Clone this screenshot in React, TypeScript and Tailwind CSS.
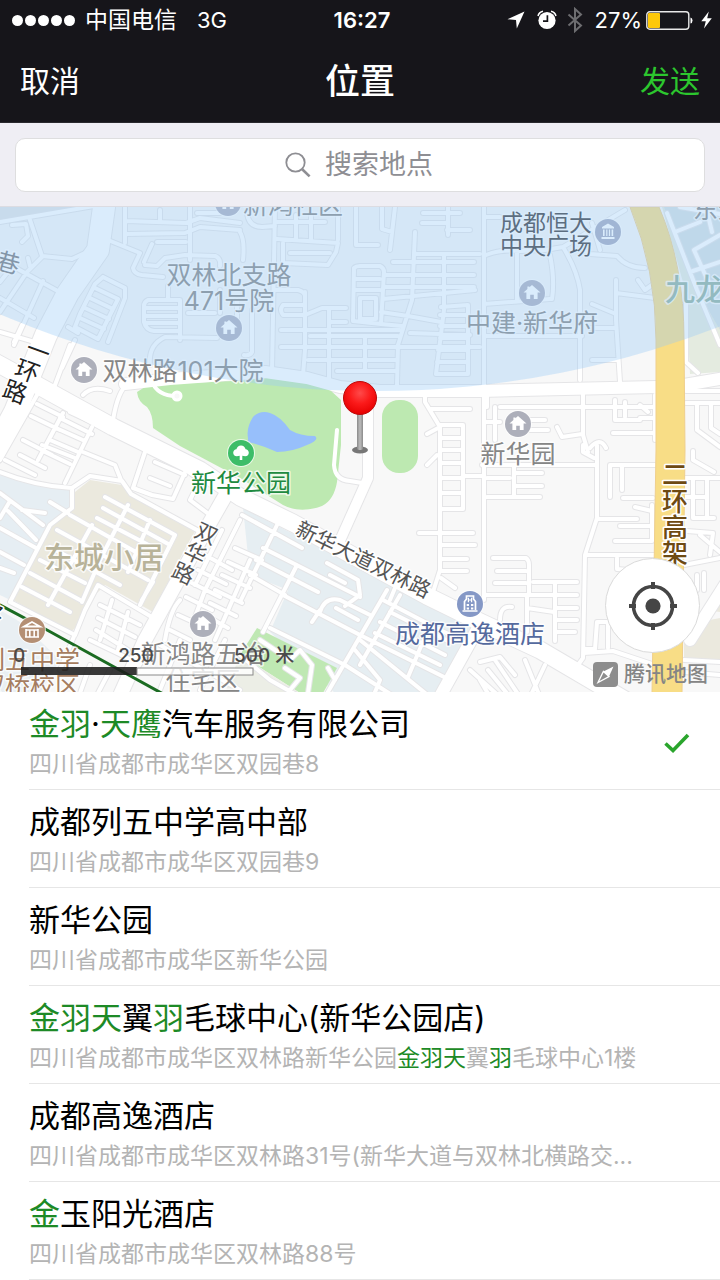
import { useState, type ReactNode } from "react";

type Part = { t: string; hit?: boolean };
type Place = { id: string; name: Part[]; address: Part[] };

const places: Place[] = [
  {
    id: "p1",
    name: [{ t: "金羽", hit: true }, { t: "·" }, { t: "天鹰", hit: true }, { t: "汽车服务有限公司" }],
    address: [{ t: "四川省成都市成华区双园巷8" }],
  },
  { id: "p2", name: [{ t: "成都列五中学高中部" }], address: [{ t: "四川省成都市成华区双园巷9" }] },
  { id: "p3", name: [{ t: "新华公园" }], address: [{ t: "四川省成都市成华区新华公园" }] },
  {
    id: "p4",
    name: [{ t: "金羽天", hit: true }, { t: "翼" }, { t: "羽", hit: true }, { t: "毛球中心(新华公园店)" }],
    address: [
      { t: "四川省成都市成华区双林路新华公园" },
      { t: "金羽天", hit: true },
      { t: "翼" },
      { t: "羽", hit: true },
      { t: "毛球中心1楼" },
    ],
  },
  {
    id: "p5",
    name: [{ t: "成都高逸酒店" }],
    address: [{ t: "四川省成都市成华区双林路31号(新华大道与双林北横路交..." }],
  },
  {
    id: "p6",
    name: [{ t: "金", hit: true }, { t: "玉阳光酒店" }],
    address: [{ t: "四川省成都市成华区双林路88号" }],
  },
];

const lanes = [
  // north-west blocks
  "M0 222L100 205M30 220L42 256L72 259L85 253M42 257L27 272L0 312M14 267L65 295M43 281L14 345M0 298L34 318M12 225L26 224L28 236L22 242M28 258L30 266M0 282L8 272",
  "M108 240L140 253L133 268Q134 274 142 275L163 277M125 207V243M126 234L185 233L200 227L240 230M190 207V260M126 221L186 223L200 218L240 223M157 242H186M145 265L157 266L165 258L185 255L215 256Q221 258 220 266M144 262L152 244M197 213H220M160 210V222",
  "M103 277L125 288L125 298L108 342M103 277L95 284L80 314M95 288L118 299M90 298L113 309M85 308L109 319M80 318L104 329M75 327L98 339M118 299L98 339M80 314L75 327M68 327L78 333",
  "M180 340V300H148Q144 302 144 306V322Q146 330 154 331H180M146 308H178M146 316H178M146 323H178M168 286V300M150 365Q148 345 165 337L217 338M188 313H215M220 290V313",
  // north-central blocks
  "M275 207L272 372M247 212Q248 227 262 227L275 226M275 222L325 222M296 215V240M311 215V240M277 239L338 243L336 252L328 265L283 263V243M290 253H330M338 207V240M240 232Q245 240 243 260",
  "M356 207V245H378M382 207V229L392 232M395 207L390 250M423 213H460M422 223H447M448 207V235M447 230H470",
  "M415 232L412 300L398 345L397 385M393 262H474M415 254H480M444 255V310L436 374H468V305L441 307M384 275H474M384 287H474M383 299L475 290M440 315H467M440 326H467M440 338H467M438 350H467M437 362H467",
  "M354 268Q356 266 360 266H380Q384 268 384 272L381 324L353 321ZM356 279H380M356 290H380M360 298H376V319H360ZM381 312L408 316L441 322M381 324L402 326M410 333L470 335",
  "M281 330H400M310 336H398M281 347H480M308 360H396M337 371H396M365 336V370M329 308V380M305 292V350L303 375M276 290H298Q305 292 305 296V305L283 305Q279 310 283 315H305L322 308H346M330 322H346",
  "M237 300V335M252 310V352Q250 356 244 355",
  // north-east blocks
  "M484 207V386M486 217H500M486 255Q500 249 520 251L545 250M517 253V300M484 304L550 299M550 255Q555 280 552 299M563 247Q577 270 580 290V380M545 250L563 247L625 210M484 336H582M583 250L590 254L617 256Q627 268 645 268M592 223L600 250M616 280V320L620 382M616 293L655 298M592 304L616 314M590 328H616M592 360H617M638 280L645 290L652 285",
  "M667 213L697 290L720 345M686 293V362L698 373M675 232L700 222M720 235L694 250L712 290M680 207L720 214M706 207L712 232M690 272L720 262",
  "M487 393V407M500 407H655M495 407V440M583 392V435L588 452M615 400V420H640M625 402V417M640 405L648 412M557 427L562 437L582 434M613 433H654M484 422H500M530 420H545M530 430H548M590 448Q600 436 606 448M655 395V440M655 418H640",
  "M686 391H720M686 403H720M697 403V430L720 447M711 403V428L720 434",
  "M484 390V600M425 393V402L440 427V570L433 592M430 409H470M440 425H463V509H441M427 434L440 427M441 438H463M441 450H463M441 463H463M441 478H463M441 493H463M427 465L437 455M463 476H484M419 533H473M441 545H475M442 559H467M442 571H467M441 578L455 588",
  "M482 465H597M514 465V497M487 478H510M514 473H542M514 486H542M487 497H540M597 445V518L585 555L583 658L573 672M583 445V452L594 458M598 519H637M585 555H655M615 541H652V505M620 526H652M610 465V497M610 465H655M622 465V490M623 498H653M635 507L652 511",
  "M493 558H526Q529 560 529 565V595M497 571H526M495 583H526M486 595H577M533 582H577M555 582V641M527 595V632M527 608L554 612M557 608H577M557 620H577M557 632H575M500 620Q500 605 512 607M597 622L595 649H584M608 622V648M597 622H608M584 653L613 651L655 665M617 558V569L652 572",
  "M693 451V460L714 472M684 478H720M693 478V518H714M707 478V518M685 497H707M687 531L713 533L710 555M684 565L720 558M700 535L720 552M697 575V590M704 573V590M684 660L720 662M684 672L720 675",
  // park surroundings
  "M337 430L334 465Q335 480 350 481L362 483M152 382Q158 396 176 396M128 384Q118 390 113 420M128 384L200 379M70 345L55 385M83 395Q92 385 110 391M75 340L62 368M0 332L45 345M22 325L14 342",
  // west blocks
  "M37 395L0 460M37 404L63 417M31 416L60 430M23 440L52 455M20 455L45 468M63 413L38 460M60 418L92 434M56 428L85 441M50 440L78 452M45 452L70 464M92 427L65 483M70 412L113 432L150 450M5 460L35 475M42 445L75 458",
  "M0 472Q35 486 72 488V508L50 525L10 602M72 488L90 476L122 481L131 494L197 530M83 452L115 465L121 480M145 452L133 488L152 495L173 499L186 470M155 462L185 475M150 478L170 486M186 470L200 480L190 500L210 515",
  "M0 493L43 525M8 511L36 540M0 528L36 548M0 552L24 565M0 568L14 573M50 502L68 513M10 501L0 518M22 510L45 513",
  "M105 497L175 535M103 508L170 545M97 518L158 550M70 515L150 560M57 530L148 580M50 547L120 585M40 560L85 583M30 573L80 600M22 587L70 612M128 505L100 560L82 602M150 520L128 572M175 535L140 605M92 525L48 605M153 582L142 600M10 602L75 635L85 610L98 585L150 616",
  "M112 600L100 640M100 605L140 625M98 618L135 637M96 630L128 650M128 612L118 650M90 640L140 664M75 634L60 670",
  // south blocks west of the avenue
  "M240 520L205 590L192 625M222 530L195 585M205 555L232 570M198 570L226 584M192 583L220 597M186 597L212 610M180 600Q170 610 165 640M178 615L200 625M170 630L190 640M235 548L262 560M228 562L256 575M222 575L250 588M215 590L242 603M210 603L236 616M205 615L228 628M250 560L215 640M160 645L240 690M180 640L160 690M225 640L200 690M90 665L80 693M110 670L98 693",
  "M277 525L240 602M242 515L302 548M263 548L360 597M256 560L318 592M250 575L285 595M297 565L263 632M283 595L360 635L450 680M270 628L345 665L395 697M327 563L358 580L360 595L345 606M320 612Q325 596 340 600L370 615M336 608L358 620M320 610L312 622M387 590L325 697M400 595L360 665M355 650L380 680L373 697M383 600L440 630L455 637M390 612L450 642M380 622L445 655M375 633L440 665M430 625L408 677M360 640L430 697M330 575L345 583M395 588L390 600",
  "M260 640L290 660L300 650L312 665L308 693M285 668L300 678L290 690M240 655L270 680L300 697M328 668L335 680",
  "M480 662L500 657L515 675M488 670L510 697M495 660L520 697M470 670L500 697M525 660L540 697M480 680L490 697M545 665L530 697",
];

const streets = [
  { w: 10, d: "M368 390V478L338 545" },
  { w: 12, d: "M125 384L170 379L265 372L307 378L340 387L380 391L480 391L657 387M684 385L725 378" },
  { w: 14, d: "M232 484L200 540L145 640L118 700" },
  { w: 12, d: "M478 628L438 700M725 585L690 640" },
  { w: 22, d: "M105 200L98 250L68 293L46 335L15 412L-8 455" },
  { w: 17, d: "M-5 362L37 385L113 427L200 470L240 497L293 523L427 596L480 622L540 650L625 700" },
];

const laneD = lanes.join("");

function Poi({ x, y, fill, children }: { x: number; y: number; fill: string; children: ReactNode }) {
  return (
    <g transform={`translate(${x} ${y})`}>
      <circle r="14" fill="#ffffff" opacity="0.7" />
      <circle r="13" fill={fill} />
      {children}
    </g>
  );
}

const House = () => (
  <path d="M0 -8L8.5 -0.5H5.6V6H1.8V1.8H-1.8V6H-5.6V-0.5H-8.5L-4.6 -4V-6.6H-2.6V-5.7Z" fill="#fff" />
);

function MapDrawing() {
  return (
    <svg
      className="absolute inset-0 h-full w-full"
      viewBox="0 207 720 485"
      preserveAspectRatio="xMidYMid slice"
      role="img"
      aria-label="地图"
      fontFamily='Inter, "Noto Sans CJK SC", sans-serif'
    >
      <defs>
        <radialGradient id="pinHead" cx="0.5" cy="0.35" r="0.65">
          <stop offset="0" stopColor="#ff4a4a" />
          <stop offset="0.5" stopColor="#fb1a1a" />
          <stop offset="1" stopColor="#e60000" />
        </radialGradient>
        <linearGradient id="pinStem" x1="0" x2="1" y1="0" y2="0">
          <stop offset="0" stopColor="#8b8b8b" />
          <stop offset="0.5" stopColor="#bdbdbd" />
          <stop offset="1" stopColor="#8b8b8b" />
        </linearGradient>
      </defs>
      <rect x="0" y="207" width="720" height="486" fill="#f8f8f8" />

      <path d="M0 475L70 489V508L50 525L10 600L0 595Z" fill="#e6eef3" />
      <path d="M75 492L90 480L122 485L131 496L197 528L187 545L153 612L105 585L90 600L80 625L70 632L13 600L50 526L72 510Z" fill="#ebe9de" />
      <path d="M243 508L480 630L442 693H335L270 632L288 590L250 575Z" fill="#e6eef2" />
      <path d="M0 610L20 622L60 660L40 693H0Z" fill="#e9eff3" />
      <path d="M257 628L337 668L323 693H300L240 655Z" fill="#bfe8b3" />
      <path d="M240 655L300 693H225Z" fill="#eceee6" />
      <path d="M662 207H720V372L690 374L686 293Z" fill="#e4ebe0" />
      <path d="M664 207H720V330L697 290Z" fill="#d5dfe2" />
      <path d="M0 207H98L0 222Z" fill="#e2e5e6" />
      <path d="M684 625L720 618V659H684ZM705 610L720 600V612Z" fill="#ebe9de" />

      <g fill="none" strokeLinecap="round" strokeLinejoin="round">
        <path d={laneD} stroke="#e5e5e7" strokeWidth="6" />
        {streets.map((s) => (
          <path key={s.d} d={s.d} stroke="#e5e5e7" strokeWidth={s.w + 2} />
        ))}
      </g>

      <path d="M137 392L145 387L167 384L233 381L267 378L290 378L330 390L341 400V445L337 482Q334 500 322 506Q300 514 283 505L240 478L180 446L153 428Q153 414 147 407Q138 402 137 392Z" fill="#bde9b1" />
      <rect x="382" y="400" width="36" height="73" rx="17" fill="#bde9b1" />
      <path d="M248 438Q246 428 253 417Q260 410 270 413Q280 416 290 430Q300 436 315 436Q320 440 307 445Q292 452 277 452Q262 445 248 442Z" fill="#97bffb" />

      <g fill="none" stroke="#ffffff" strokeLinecap="round" strokeLinejoin="round">
        <path d={laneD} strokeWidth="4" />
        {streets.map((s) => (
          <path key={s.d} d={s.d} strokeWidth={s.w} />
        ))}
      </g>
      <circle cx="177" cy="396" r="4" fill="#f8f8f8" stroke="#fff" strokeWidth="3" />

      <path d="M630 207H659Q684 265 684 340L685 450L682 693H652L656 450V340Q656 270 630 207Z" fill="#f8dd86" stroke="#efcf8c" strokeWidth="1" />
      <path d="M-2 604L47 630L165 695" fill="none" stroke="#1b6b22" strokeWidth="3" />

      <Poi x={229} y={328} fill="#adafc0"><House /></Poi>
      <Poi x={228} y={203} fill="#adafc0"><House /></Poi>
      <Poi x={532} y={293} fill="#adafc0"><House /></Poi>
      <Poi x={84} y={370} fill="#adafba"><House /></Poi>
      <Poi x={518} y={424} fill="#adafba"><House /></Poi>
      <Poi x={203} y={624} fill="#adafba"><House /></Poi>
      <Poi x={608} y={232} fill="#a3a9c0">
        <path d="M-6 -5L0 -8.5L6 -5V-3.5H-6ZM-5 -2.5H-3.4V4H-5ZM-1.8 -2.5H-.6V4H-1.8ZM.9 -2.5H2.1V4H.9ZM3.6 -2.5H5.2V4H3.6ZM-6.5 5H6.5V7H-6.5Z" fill="#fff" />
      </Poi>
      <Poi x={32} y={630} fill="#b48f74">
        <path d="M-8 -3.5L0 -8L8 -3.5Z" fill="none" stroke="#fff" strokeWidth="1.8" />
        <path d="M-6 -1V7M6 -1V7M-2.2 0V7M2.2 0V7M-7 7H7M-6 0H6" fill="none" stroke="#fff" strokeWidth="1.6" />
      </Poi>
      <Poi x={470} y={604} fill="#8598c6">
        <path d="M-5.5 6V-2.5L-3.5 -5V-8H3.5V-5L5.5 -2.5V6M-7.5 7H7.5" fill="none" stroke="#fff" strokeWidth="1.7" />
        <path d="M-1.6 -6.3V-1.8M1.6 -6.3V-1.8M-1.6 -4H1.6" stroke="#fff" strokeWidth="1.2" />
        <path d="M-3.3 0H-1V2H-3.3ZM1 0H3.3V2H1ZM-3.3 3.4H-1V5.4H-3.3ZM1 3.4H3.3V5.4H1Z" fill="#fff" />
      </Poi>
      <Poi x={241} y={453} fill="#3dbd68">
        <path d="M-1.3 7V2.8Q-7.8 4.4 -7.8 -.4Q-7.4 -3.6 -4.6 -3.8Q-3.6 -7.6 0 -7.6Q3.6 -7.6 4.6 -3.8Q7.4 -3.6 7.8 -.4Q7.8 4.4 1.3 2.8V7Z" fill="#fff" />
      </Poi>

      <g stroke="#ffffff" strokeWidth="3" strokeLinejoin="round" paintOrder="stroke" fontSize="25" textAnchor="middle" fill="#868686">
        <g strokeOpacity="0.75">
          <text x="293" y="214">新鸿社区</text>
          <text x="229" y="284">双林北支路</text>
          <text x="229" y="310">471号院</text>
          <text x="532" y="332">中建·新华府</text>
          <text x="183" y="380">双林路101大院</text>
          <text x="518" y="463">新华园</text>
          <text x="203" y="663">新鸿路五冶</text>
          <text x="203" y="690">住宅区</text>
          <text x="718" y="218">东光</text>
          <text x="30" y="669" fill="#a67d60">列五中学</text>
          <text x="30" y="695" fill="#a67d60">双桥校区</text>
          <text x="241" y="492" fill="#208a40">新华公园</text>
          <text x="470" y="643" fill="#556a9e">成都高逸酒店</text>
          <text x="546" y="231" fontSize="23" fill="#39383c">成都恒大</text>
          <text x="546" y="254" fontSize="23" fill="#39383c">中央广场</text>
          <text x="104" y="568" fontSize="30" fontWeight="500" fill="#b8b399">东城小居</text>
          <text x="695" y="300" fontSize="30" fontWeight="500" fill="#8fb0a0">九龙</text>
        </g>
        <g fill="#222222" fontSize="24" textAnchor="start">
          <text x="24 13 1" y="355 375 396" rotate="20">一环路</text>
          <text x="-23" y="617" rotate="20">路</text>
          <text x="-6" y="268" rotate="15" fill="#77777a">巷</text>
        </g>
        <text x="193 182 170" y="536 556 576" rotate="25" fontSize="22" fill="#555555" textAnchor="start">双华路</text>
        <text transform="translate(294 534) rotate(26)" fontSize="21" fill="#555555" textAnchor="start">新华大道双林路</text>
        <text x="662 662 662 662" y="484 511 537 563" fontSize="26" fontWeight="500" fill="#6e4a12" textAnchor="start">二环高架</text>
      </g>

      <circle cx="375" cy="-564" r="955" fill="#9accf8" fillOpacity="0.37" />

      <ellipse cx="360" cy="450" rx="8" ry="3.5" fill="#777777" />
      <rect x="357" y="412" width="6" height="38" rx="2" fill="url(#pinStem)" />
      <circle cx="360" cy="398" r="16.5" fill="url(#pinHead)" stroke="#bd0a0a" strokeWidth="1" />

      <rect x="21" y="667" width="116" height="8" fill="#1c1c1c" fillOpacity="0.88" />
      <rect x="137" y="668" width="116" height="7" fill="#ffffff" fillOpacity="0.8" stroke="#8a8a8a" strokeWidth="1" />
      <g fontSize="19" fontWeight="500" fill="#4a4a4a">
        <text x="13" y="662">0</text>
        <text x="136" y="662" textAnchor="middle">250</text>
        <text x="234" y="662">500 米</text>
      </g>
    </svg>
  );
}

function StatusBar() {
  return (
    <div className="grid h-10 grid-cols-[1fr_auto_1fr] items-center pl-3 pr-2 text-[22px] leading-10">
      <div className="flex items-center">
        <span className="flex gap-0.5" aria-hidden="true">
          {[0, 1, 2, 3, 4].map((i) => (
            <i key={i} className="size-[11px] rounded-full bg-white" />
          ))}
        </span>
        <span className="ml-2.5 text-[23px]">中国电信</span>
        <span className="ml-5">3G</span>
      </div>
      <span className="font-semibold">16:27</span>
      <div className="flex items-center justify-end">
        <svg width="18" height="18" viewBox="0 0 18 18" aria-hidden="true">
          <path d="M17.5 0.5L9.8 17.5L9 9L0.5 8.2Z" fill="#fff" />
        </svg>
        <svg className="ml-3" width="20" height="20" viewBox="0 0 20 20" aria-hidden="true">
          <circle cx="10" cy="10.5" r="8.6" fill="#fff" />
          <path d="M1 6Q2 2 6 1.2M19 6Q18 2 14 1.2" fill="none" stroke="#fff" strokeWidth="1.5" />
          <path d="M10.4 5.2V11.2H6" fill="none" stroke="#16151a" strokeWidth="1.7" />
        </svg>
        <svg className="ml-2.5" width="16" height="26" viewBox="0 0 16 26" aria-hidden="true">
          <path d="M1.5 7.5L14 18.5L8 24V2L14 7.5L1.5 18.5" fill="none" stroke="#6d6d70" strokeWidth="2" />
        </svg>
        <span className="ml-3">27%</span>
        <svg className="ml-1" width="47" height="19" viewBox="0 0 47 19" aria-hidden="true">
          <rect x="0.8" y="0.8" width="42" height="17.4" rx="3" fill="none" stroke="#e8e8e8" strokeWidth="1.4" />
          <rect x="2" y="2" width="12" height="15" rx="1" fill="#fdc80a" />
          <path d="M44.5 6.5Q46.5 7 46.5 9.5T44.5 12.5Z" fill="#fff" />
        </svg>
        <svg className="ml-2" width="11" height="18" viewBox="0 0 11 18" aria-hidden="true">
          <path d="M7.8 0.5L0.3 10.2H4.8L3 17.5L10.8 7.2H6.2Z" fill="#fff" />
        </svg>
      </div>
    </div>
  );
}

function Marked({ parts }: { parts: Part[] }) {
  return (
    <>
      {parts.map((p, i) =>
        p.hit ? (
          <span key={i} className="text-[#1d8a26]">
            {p.t}
          </span>
        ) : (
          <span key={i}>{p.t}</span>
        ),
      )}
    </>
  );
}

export default function App() {
  const [selected, setSelected] = useState("p1");
  const [query, setQuery] = useState("");

  return (
    <div className="flex min-h-screen flex-col bg-white font-[Inter,'Noto_Sans_CJK_SC',sans-serif]">
      <header className="bg-[#16151a] text-white">
        <StatusBar />
        <div className="grid h-[83px] grid-cols-[1fr_auto_1fr] items-center border-b border-[#2a292e] px-5">
          <button type="button" className="justify-self-start text-[30px]">
            取消
          </button>
          <h1 className="text-[35px] font-medium">位置</h1>
          <button type="button" className="justify-self-end text-[30px] text-[#2cc62e]">
            发送
          </button>
        </div>
      </header>

      <div className="border-b border-[#dcdce2] bg-[#efeef4] px-[15px] pt-[15px] pb-[14px]">
        <label className="flex h-[54px] items-center justify-center gap-3.5 rounded-[10px] border border-[#dededf] bg-white">
          <svg width="26" height="26" viewBox="0 0 26 26" aria-hidden="true">
            <circle cx="10.5" cy="10.5" r="9.2" fill="none" stroke="#8e8e93" strokeWidth="1.8" />
            <path d="M17.2 17.2L24.6 24.4" stroke="#8e8e93" strokeWidth="2.6" />
          </svg>
          <input
            type="text"
            aria-label="搜索地点"
            placeholder="搜索地点"
            value={query}
            onChange={(e) => setQuery(e.target.value)}
            className="w-[110px] bg-transparent text-[27px] text-black outline-none placeholder:text-[#8e8e93]"
          />
        </label>
      </div>

      <section className="relative min-h-[480px] flex-1 overflow-hidden">
        <MapDrawing />
        <div className="absolute right-3 bottom-0.5 flex items-center gap-1.5">
          <svg width="25" height="25" viewBox="0 0 25 25" aria-hidden="true">
            <rect width="25" height="25" rx="4" fill="#8d8d8d" />
            <path d="M20.5 4.5L16 14.6L10.4 9.4Z" fill="#fff" />
            <path d="M10.4 9.4L16 14.6L5 20.5Z" fill="none" stroke="#fff" strokeWidth="1.3" />
          </svg>
          <span className="text-[21px] leading-8 font-medium text-[#858585]">腾讯地图</span>
        </div>
        <button
          type="button"
          aria-label="定位到当前位置"
          className="absolute right-5 bottom-[39px] flex size-[95px] items-center justify-center rounded-full border border-[#dadada] bg-white"
        >
          <svg width="50" height="50" viewBox="0 0 50 50" aria-hidden="true">
            <circle cx="25" cy="25" r="19.5" fill="none" stroke="#454545" strokeWidth="3.6" />
            <circle cx="25" cy="25" r="7.6" fill="#454545" />
            <path d="M25 1V8M25 42V49M1 25H8M42 25H49" stroke="#454545" strokeWidth="4" />
          </svg>
        </button>
      </section>

      <ul className="bg-white pl-[29px]">
        {places.map((p) => (
          <li key={p.id} className="border-b border-[#e6e6e6]">
            <button
              type="button"
              aria-pressed={selected === p.id}
              onClick={() => setSelected(p.id)}
              className="flex w-full items-center justify-between pt-[11px] pr-[30px] pb-[6px] text-left"
            >
              <span className="min-w-0">
                <span className="block truncate text-[31px] leading-[42px] text-black">
                  <Marked parts={p.name} />
                </span>
                <span className="block truncate text-[23px] leading-[38px] text-[#b4b4b4]">
                  <Marked parts={p.address} />
                </span>
              </span>
              {selected === p.id && (
                <svg className="shrink-0" width="26" height="20" viewBox="0 0 26 20" aria-hidden="true">
                  <path d="M1.5 10.5L9 17.5L24 2" fill="none" stroke="#2aa52c" strokeWidth="3.6" />
                </svg>
              )}
            </button>
          </li>
        ))}
      </ul>
    </div>
  );
}
